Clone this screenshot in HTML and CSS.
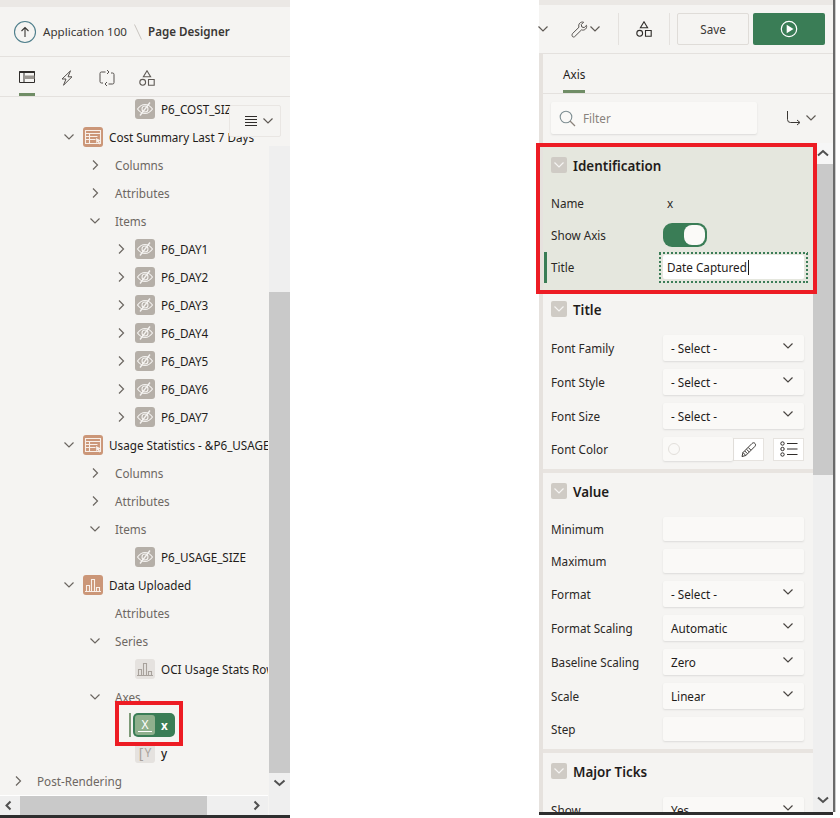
FILE: index.html
```html
<!DOCTYPE html>
<html lang="en">
<head>
<meta charset="utf-8">
<title>Page Designer</title>
<link rel="stylesheet" href="styles.css">
</head>
<body>
<svg class="defs" width="0" height="0" aria-hidden="true">
  <symbol id="chev-r" viewBox="0 0 10 12"><path d="M3 1.500 7.500 6 3 10.500" fill="none" stroke="currentColor" stroke-width="1.200"/></symbol>
  <symbol id="chev-d" viewBox="0 0 12 10"><path d="M1.500 2.500 6 7l4.500-4.500" fill="none" stroke="currentColor" stroke-width="1.200"/></symbol>
  <symbol id="eye" viewBox="0 0 20 20"><g fill="none" stroke="#f5f3f1" stroke-width="1.100"><path d="M2.500 10C5 6.500 7.500 5.500 10 5.500S15 6.500 17.500 10C15 13.500 12.500 14.500 10 14.500S5 13.500 2.500 10Z"/><circle cx="10" cy="10" r="3"/><path d="M15 3.500 5 16.500" stroke-width="1.300"/></g></symbol>
  <symbol id="report" viewBox="0 0 20 20"><g fill="none" stroke="#f8efe9" stroke-width="1.100"><path d="M2.500 3.500h15v13h-15zM2.500 6.500h15M2.500 9.500h12M2.500 12.500h10M6.500 6.500v10"/></g><path d="M13 11l5 2.500-2 .8 1.500 2.500-1.300.7-1.400-2.500-1.500 1.300z" fill="#f8efe9"/></symbol>
  <symbol id="chart" viewBox="0 0 20 20"><g fill="none" stroke="currentColor" stroke-width="1.100"><path d="M3.500 10.500h3v6h-3zM8.500 4.500h3v12h-3zM13.500 12.500h3v4h-3zM2 16.500h16"/></g></symbol>
  <symbol id="shapes" viewBox="0 0 16 16"><g fill="none" stroke="currentColor" stroke-width="1.100"><path d="M8 .8l3.600 6H4.400zM9.500 9.500h5.700v5.700H9.500z"/><circle cx="3.700" cy="12.300" r="2.900"/></g></symbol>
</svg>

<div class="app">
  <section class="col-left">
    <div class="strip-left"></div>
    <header class="crumbs">
      <svg class="up-icon" width="24" height="24" viewBox="0 0 24 24"><circle cx="12" cy="12" r="10.500" fill="none" stroke="#4f7f8c" stroke-width="1.100"/><path d="M12 17V7.500M8.500 11 12 7.500l3.500 3.500" fill="none" stroke="#3a3734" stroke-width="1.100"/></svg>
      <span class="crumb">Application 100</span>
      <svg class="crumb-sep" width="8" height="16" viewBox="0 0 8 16"><path d="M.5.500 7.500 15.500" stroke="#c9c5c0" fill="none"/></svg>
      <span class="crumb crumb-strong">Page Designer</span>
    </header>
    <nav class="left-tabs">
      <div class="ltab ltab-active">
        <svg width="16" height="16" viewBox="0 0 16 16"><path d="M.5 1.500h15v11H.5z" fill="none" stroke="#2f2c2a"/><path d="M.5 2h15" stroke="#2f2c2a" stroke-width="2"/><path d="M5 2.500v10" stroke="#2f2c2a"/><path d="M5 5.500h10.500V9H5z" fill="#9a9691"/></svg>
      </div>
      <div class="ltab">
        <svg width="16" height="16" viewBox="0 0 16 16"><path d="M11.500.8 3 9h4l-2.500 6.200L13 6.800H9z" fill="none" stroke="#55514e"/></svg>
      </div>
      <div class="ltab">
        <svg width="16" height="16" viewBox="0 0 16 16"><path d="M6.500 2H2.500A1.500 1.500 0 0 0 1 3.500v8A1.500 1.500 0 0 0 2.500 13H4M9.500 14h4a1.500 1.500 0 0 0 1.500-1.500v-8A1.500 1.500 0 0 0 13.500 3H12M8 0 10 2 8 4M8 12 6 14l2 2" fill="none" stroke="#55514e"/></svg>
      </div>
      <div class="ltab"><svg class="ink-mid" width="16" height="16"><use href="#shapes"/></svg></div>
    </nav>
    <div class="left-body">
      <div class="left-main">
        <div class="tree">
          <div class="row row-first lvl4"><span class="tw"></span><svg class="ic ic-item"><use href="#eye"/></svg><span class="name">P6_COST_SIZE</span></div>
          <div class="row lvl2"><svg class="tw"><use href="#chev-d"/></svg><svg class="ic ic-region"><use href="#report"/></svg><span class="name">Cost Summary Last 7 Days</span></div>
          <div class="row lvl3"><svg class="tw"><use href="#chev-r"/></svg><span class="group">Columns</span></div>
          <div class="row lvl3"><svg class="tw"><use href="#chev-r"/></svg><span class="group">Attributes</span></div>
          <div class="row lvl3"><svg class="tw"><use href="#chev-d"/></svg><span class="group">Items</span></div>
          <div class="row lvl4"><svg class="tw"><use href="#chev-r"/></svg><svg class="ic ic-item"><use href="#eye"/></svg><span class="name">P6_DAY1</span></div>
          <div class="row lvl4"><svg class="tw"><use href="#chev-r"/></svg><svg class="ic ic-item"><use href="#eye"/></svg><span class="name">P6_DAY2</span></div>
          <div class="row lvl4"><svg class="tw"><use href="#chev-r"/></svg><svg class="ic ic-item"><use href="#eye"/></svg><span class="name">P6_DAY3</span></div>
          <div class="row lvl4"><svg class="tw"><use href="#chev-r"/></svg><svg class="ic ic-item"><use href="#eye"/></svg><span class="name">P6_DAY4</span></div>
          <div class="row lvl4"><svg class="tw"><use href="#chev-r"/></svg><svg class="ic ic-item"><use href="#eye"/></svg><span class="name">P6_DAY5</span></div>
          <div class="row lvl4"><svg class="tw"><use href="#chev-r"/></svg><svg class="ic ic-item"><use href="#eye"/></svg><span class="name">P6_DAY6</span></div>
          <div class="row lvl4"><svg class="tw"><use href="#chev-r"/></svg><svg class="ic ic-item"><use href="#eye"/></svg><span class="name">P6_DAY7</span></div>
          <div class="row lvl2"><svg class="tw"><use href="#chev-d"/></svg><svg class="ic ic-region"><use href="#report"/></svg><span class="name">Usage Statistics - &amp;P6_USAGE_SIZE.</span></div>
          <div class="row lvl3"><svg class="tw"><use href="#chev-r"/></svg><span class="group">Columns</span></div>
          <div class="row lvl3"><svg class="tw"><use href="#chev-r"/></svg><span class="group">Attributes</span></div>
          <div class="row lvl3"><svg class="tw"><use href="#chev-d"/></svg><span class="group">Items</span></div>
          <div class="row lvl4"><span class="tw"></span><svg class="ic ic-item"><use href="#eye"/></svg><span class="name">P6_USAGE_SIZE</span></div>
          <div class="row lvl2"><svg class="tw"><use href="#chev-d"/></svg><svg class="ic ic-region ic-chart"><use href="#chart"/></svg><span class="name">Data Uploaded</span></div>
          <div class="row lvl3"><span class="tw"></span><span class="group">Attributes</span></div>
          <div class="row lvl3"><svg class="tw"><use href="#chev-d"/></svg><span class="group">Series</span></div>
          <div class="row lvl4"><span class="tw"></span><svg class="ic ic-light"><use href="#chart"/></svg><span class="name">OCI Usage Stats Rows</span></div>
          <div class="row lvl3"><svg class="tw"><use href="#chev-d"/></svg><span class="group">Axes</span></div>
          <div class="row lvl4">
            <span class="tw sel-mark"></span>
            <span class="sel-pill">
              <svg class="ic ic-x" viewBox="0 0 20 20"><path d="M3 16.500h14" stroke="#fff" fill="none"/></svg>
              <span class="sel-x-letter">X</span>
              <span class="sel-name">x</span>
            </span>
          </div>
          <div class="row lvl4"><span class="tw"></span><span class="ic ic-y"><span class="y-bracket">[</span>Y</span><span class="name name-med">y</span></div>
          <div class="row lvl1"><svg class="tw"><use href="#chev-r"/></svg><span class="group">Post-Rendering</span></div>
        </div>
        <div class="hscroll">
          <svg class="harrow" width="20" height="19" viewBox="0 0 20 19"><path d="M10.500 5.500 6.500 9.500l4 4" fill="none" stroke="#505050" stroke-width="2"/></svg>
          <div class="hthumb"></div>
          <svg class="harrow harrow-end" width="20" height="19" viewBox="0 0 20 19"><path d="M7.500 5.500l4 4-4 4" fill="none" stroke="#505050" stroke-width="2"/></svg>
        </div>
      </div>
      <div class="vscroll vscroll-left">
        <div class="vthumb"></div>
        <svg class="varrow" width="21" height="21" viewBox="0 0 21 21"><path d="M5.500 7.500l5 4.500 5-4.500" fill="none" stroke="#505050" stroke-width="2"/></svg>
      </div>
      <div class="tree-menu">
        <svg width="14" height="12" viewBox="0 0 14 12"><path d="M1 1.500h12M1 4.500h12M1 7.500h12M1 10.500h12" stroke="#2f2c2a"/></svg>
        <svg class="ink-mid" width="12" height="10"><use href="#chev-d"/></svg>
      </div>
    </div>
    <div class="bottom-line"></div>
  </section>

  <section class="col-mid"></section>

  <section class="col-right">
    <div class="strip-right"></div>
    <header class="toolbar">
      <svg class="ink-mid tb-lead" width="12" height="10"><use href="#chev-d"/></svg>
      <svg class="tb-wrench" width="17" height="17" viewBox="0 0 17 17"><path d="M1.300 12.800 8 6.200C7.400 4.500 7.800 3 8.900 2c1-.9 2.300-1.200 3.700-.8L10.300 3.500l.5 2.500 2.400.6 2.300-2.300c.4 1.400.1 2.700-.9 3.700-1 1-2.500 1.400-4.100.9l-6.700 6.600c-.7.700-1.700.7-2.300.1-.6-.7-.6-1.700-.2-2.800Z" fill="none" stroke="#55514e"/></svg>
      <svg class="ink-mid tb-chev" width="12" height="10"><use href="#chev-d"/></svg>
      <span class="tb-sep"></span>
      <svg class="tb-shapes ink-dark" width="16" height="16"><use href="#shapes"/></svg>
      <span class="tb-sep tb-sep2"></span>
      <button class="btn-save" type="button">Save</button>
      <button class="btn-run" type="button" aria-label="Run">
        <svg width="18" height="18" viewBox="0 0 18 18"><circle cx="9" cy="9" r="7.700" fill="none" stroke="#fff" stroke-width="1.200"/><path d="M6.700 4.800 13.500 9l-6.800 4.200z" fill="#fff"/></svg>
      </button>
    </header>
    <div class="right-body">
      <div class="band"></div>
      <div class="right-inner">
        <div class="rtabs"><span class="rtab">Axis</span></div>
        <div class="filter-bar">
          <div class="filter">
            <svg width="17" height="17" viewBox="0 0 17 17"><circle cx="7" cy="7" r="5.800" fill="none" stroke="#7f8f93" stroke-width="1.100"/><path d="M11 11l5 5" stroke="#8b837b" stroke-width="1.200"/></svg>
            <span class="filter-text">Filter</span>
          </div>
          <svg class="sort-ic" width="16" height="16" viewBox="0 0 16 16"><path d="M1.500 1v8.500a3 3 0 0 0 3 3h9M11 10l3 2.500-3 2.500" fill="none" stroke="#3a3734"/></svg>
          <svg class="ink-mid sort-chev" width="12" height="10"><use href="#chev-d"/></svg>
        </div>
        <div class="props-wrap">
          <div class="props">
            <section class="sec sec-hl">
              <h2 class="sec-head"><span class="toggle-box"><svg width="12" height="10"><use href="#chev-d"/></svg></span>Identification</h2>
              <div class="prop"><span class="lbl">Name</span><span class="val-text">x</span></div>
              <div class="prop"><span class="lbl">Show Axis</span><span class="switch"><span class="knob"></span></span></div>
              <div class="prop prop-active">
                <span class="lbl">Title</span>
                <span class="field field-focus">Date Captured<span class="caret"></span></span>
              </div>
            </section>
            <section class="sec">
              <h2 class="sec-head"><span class="toggle-box"><svg width="12" height="10"><use href="#chev-d"/></svg></span>Title</h2>
              <div class="prop prop-sel"><span class="lbl">Font Family</span><span class="field field-sel">- Select -<svg class="sel-chev" width="12" height="10"><use href="#chev-d"/></svg></span></div>
              <div class="prop prop-sel"><span class="lbl">Font Style</span><span class="field field-sel">- Select -<svg class="sel-chev" width="12" height="10"><use href="#chev-d"/></svg></span></div>
              <div class="prop prop-sel"><span class="lbl">Font Size</span><span class="field field-sel">- Select -<svg class="sel-chev" width="12" height="10"><use href="#chev-d"/></svg></span></div>
              <div class="prop">
                <span class="lbl">Font Color</span>
                <span class="color-group">
                  <span class="field color-field"><span class="swatch"></span></span>
                  <span class="mini-btn">
                    <svg width="18" height="18" viewBox="0 0 18 18"><path d="M2 16.500l1-4L12 3.500c1-1 2.300-1 3 0 .8.800.7 2-.2 3L5.800 15.500zM3 12.500l2.800 3M4.800 11l2.500 2.600M6.500 9.300l2.600 2.500M8.300 7.500l2.500 2.600" fill="none" stroke="#3a3734"/></svg>
                  </span>
                  <span class="mini-btn mini-btn-list">
                    <svg width="18" height="16" viewBox="0 0 18 16"><path d="M7 2.500h10.500M7 8h10.500M7 13.500h10.500" stroke="#2f2c2a"/><g fill="none" stroke="#2f2c2a"><circle cx="2.500" cy="2.500" r="1.700"/><circle cx="2.500" cy="8" r="1.700"/><circle cx="2.500" cy="13.500" r="1.700"/></g></svg>
                  </span>
                </span>
              </div>
            </section>
            <section class="sec">
              <h2 class="sec-head"><span class="toggle-box"><svg width="12" height="10"><use href="#chev-d"/></svg></span>Value</h2>
              <div class="prop"><span class="lbl">Minimum</span><span class="field"></span></div>
              <div class="prop"><span class="lbl">Maximum</span><span class="field"></span></div>
              <div class="prop prop-sel"><span class="lbl">Format</span><span class="field field-sel">- Select -<svg class="sel-chev" width="12" height="10"><use href="#chev-d"/></svg></span></div>
              <div class="prop prop-sel"><span class="lbl">Format Scaling</span><span class="field field-sel">Automatic<svg class="sel-chev" width="12" height="10"><use href="#chev-d"/></svg></span></div>
              <div class="prop prop-sel"><span class="lbl">Baseline Scaling</span><span class="field field-sel">Zero<svg class="sel-chev" width="12" height="10"><use href="#chev-d"/></svg></span></div>
              <div class="prop prop-sel"><span class="lbl">Scale</span><span class="field field-sel">Linear<svg class="sel-chev" width="12" height="10"><use href="#chev-d"/></svg></span></div>
              <div class="prop"><span class="lbl">Step</span><span class="field"></span></div>
            </section>
            <section class="sec">
              <h2 class="sec-head"><span class="toggle-box"><svg width="12" height="10"><use href="#chev-d"/></svg></span>Major Ticks</h2>
              <div class="prop prop-sel"><span class="lbl">Show</span><span class="field field-sel">Yes<svg class="sel-chev" width="12" height="10"><use href="#chev-d"/></svg></span></div>
            </section>
          </div>
          <div class="vscroll vscroll-right">
            <svg class="varrow varrow-top" width="20" height="21" viewBox="0 0 20 21"><path d="M5 12.500l5-4.500 5 4.500" fill="none" stroke="#505050" stroke-width="2"/></svg>
            <div class="vthumb-right"></div>
            <svg class="varrow varrow-end" width="20" height="21" viewBox="0 0 20 21"><path d="M5 7.500l5 4.500 5-4.500" fill="none" stroke="#505050" stroke-width="2"/></svg>
          </div>
        </div>
      </div>
    </div>
    <div class="bottom-line"></div>
  </section>
  <div class="edge"></div>

  <div class="callout callout-id"></div>
  <div class="callout callout-node"></div>
</div>
</body>
</html>
```
FILE: styles.css
```css
* { box-sizing: border-box; }
html, body { margin: 0; padding: 0; background: #fff; }
body { font-family: "Noto Sans", "Open Sans", sans-serif; font-size: 11.700px; color: #1f1c1a; }
.defs { position: absolute; }
.app { position: relative; display: flex; align-items: flex-start; width: 840px; height: 818px; overflow: hidden; background: #fff; }
svg { display: block; flex: none; }
.ink-mid { color: #5f5a55; }
.ink-dark { color: #2f2c2a; }

.col-left, .col-right { display: flex; flex-direction: column; background: #f5f4f2; }
.col-left { width: 290px; height: 818px; }
.col-mid { width: 249px; height: 814px; margin-top: 4px; background: #fff; }
.col-right { width: 294px; height: 815px; }
.edge { width: 3px; height: 812px; background: #ccc; border-left: 2px solid #6a6a6a; }
.strip-left { height: 7px; flex: none; background: #ebe8e5; }
.strip-right { height: 5px; flex: none; background: #ebe8e5; }
.bottom-line { height: 3px; flex: none; background: #2e2e2e; }

.crumbs { display: flex; align-items: center; height: 50px; flex: none; padding-left: 13px; border-bottom: 1px solid #e4e1de; }
.up-icon { margin-right: 6px; }
.crumb { font-size: 11.600px; color: #3a3734; white-space: nowrap; }
.crumb-strong { font-weight: 600; }
.crumb-sep { margin: 0 6px 0 7px; }

.left-tabs { display: flex; height: 40px; flex: none; padding-left: 19px; gap: 24px; border-bottom: 1px solid #e4e1de; }
.ltab { width: 16px; height: 39px; padding-top: 13px; }
.ltab-active { border-bottom: 3px solid #708d66; }

.left-body { position: relative; flex: 1; min-height: 0; display: flex; }
.left-main { width: 268px; display: flex; flex-direction: column; }
.tree { flex: 1; min-height: 0; overflow: hidden; }
.row { display: flex; align-items: center; height: 28px; white-space: nowrap; color: #1f1c1a; }
.row-first { margin-top: -2px; }
.lvl1 { padding-left: 12px; }
.lvl2 { padding-left: 63px; }
.lvl3 { padding-left: 89px; }
.lvl4 { padding-left: 115px; }
.tw { width: 12px; height: 12px; margin-right: 8px; flex: none; color: #6b6661; }
.lvl1 .tw { margin-right: 13px; }
.lvl2 .tw { margin-right: 8px; }
.lvl3 .tw { margin-right: 14px; }
.ic { width: 20px; height: 20px; border-radius: 3px; flex: none; margin-right: 6px; }
.ic-item { background: #b5afa8; }
.ic-region { background: #cb9678; }
.ic-chart { color: #f8efe9; }
.ic-light { background: #e5e2df; color: #a8a29c; }
.group { color: #6d6762; }
.name { color: #1f1c1a; }
.name-med { font-weight: 500; }
.ic-y { display: flex; align-items: center; justify-content: center; background: #e5e2df; color: #a8a29c; font-size: 12px; line-height: 1; }
.y-bracket { margin-right: 1px; font-size: 14px; }
.sel-mark { width: 2px; height: 24px; margin-left: 14px; margin-right: 2px; background: #7d9a78; }
.sel-pill { position: relative; display: flex; align-items: center; width: 42px; height: 24px; padding-left: 2px; border-radius: 5px; background: #3a7d56; }
.ic-x { background: #8fb08d; margin-right: 6px; }
.sel-x-letter { position: absolute; left: 2px; width: 20px; text-align: center; color: #fff; font-size: 12px; line-height: 20px; }
.sel-name { color: #fff; font-weight: 700; }

.hscroll { display: flex; height: 20px; flex: none; background: #efefef; border-top: 1px solid #fff; }
.harrow { width: 20px; height: 19px; }
.hthumb { width: 187px; background: #c9c9c9; }
.harrow-end { margin-left: 40px; }
.vscroll { width: 21px; display: flex; flex-direction: column; align-items: center; background: #efefef; }
.vscroll-left { margin-left: 1px; margin-top: 49px; padding-top: 146px; }
.vthumb { width: 100%; height: 481px; flex: none; background: #c9c9c9; }
.tree-menu { position: absolute; left: 229px; top: 8px; display: flex; align-items: center; gap: 4px; width: 52px; height: 32px; padding-left: 14px; background: #f5f4f2; border: 1px solid #e9e6e3; border-radius: 2px; }
.varrow { flex: none; }

.toolbar { display: flex; align-items: center; height: 49px; flex: none; border-bottom: 1px solid #e4e1de; }
.tb-lead { margin-left: -2px; }
.tb-wrench { margin-left: 22px; }
.tb-chev { margin-left: 1px; }
.tb-sep { width: 1px; height: 32px; margin-left: 17px; background: #e4e1de; }
.tb-shapes { margin-left: 17px; }
.tb-sep2 { margin-left: 17px; }
.btn-save, .btn-run { height: 32px; width: 72px; border-radius: 2px; font: inherit; padding: 0; display: flex; align-items: center; justify-content: center; }
.btn-save { margin-left: 7px; background: #f5f4f2; border: 1px solid #dfdcd8; color: #3a3734; }
.btn-run { margin-left: 4px; background: #3a7d56; border: 0; }

.right-body { display: flex; flex: 1; min-height: 0; }
.band { width: 4px; flex: none; background: #e6e2de; }
.right-inner { flex: 1; min-width: 0; display: flex; flex-direction: column; }
.rtabs { height: 40px; flex: none; padding-left: 20px; border-bottom: 1px solid #e4e1de; }
.rtab { display: inline-block; height: 39px; padding-top: 11px; line-height: 18px; border-bottom: 3px solid #708d66; color: #1f1c1a; }
.filter-bar { display: flex; align-items: center; height: 49px; flex: none; padding: 0 0 1px 8px; }
.filter { display: flex; align-items: center; width: 206px; height: 32px; padding-left: 8px; background: #faf9f7; border-radius: 2px; box-shadow: 0 1px 2px rgba(0,0,0,.1); }
.filter-text { margin-left: 7px; color: #88827c; }
.sort-ic { margin-left: 29px; }
.sort-chev { margin-left: 3px; }

.props-wrap { display: flex; flex: 1; min-height: 0; }
.props { width: 270px; flex: none; overflow: hidden; }
.sec { padding: 10px 9px 8px 8px; border-bottom: 4px solid #e8e4e0; display: flex; flex-direction: column; gap: 8px; }
.sec-hl { padding: 14px 9px 12px 8px; border-bottom: 0; background: #e5e7de; }
.sec-head { display: flex; align-items: center; height: 16px; margin: 0 0 10px; padding-top: 2px; font-size: 13.400px; font-weight: 600; color: #1f1c1a; gap: 6px; }
.toggle-box { display: flex; align-items: center; justify-content: center; width: 16px; height: 16px; margin-top: -2px; border-radius: 2px; background: #cfcbc5; color: #f5f4f2; }
.prop { display: flex; align-items: center; min-height: 24px; }
.lbl { width: 112px; flex: none; color: #2a2725; white-space: nowrap; }
.val-text { padding-left: 4px; color: #2a2725; }
.field { display: flex; align-items: center; position: relative; width: 141px; height: 24px; padding-left: 4px; border-radius: 2px; background: #faf9f7; box-shadow: 0 1px 2px rgba(0,0,0,.1); color: #1f1c1a; white-space: nowrap; }
.field-sel { height: 26px; padding-left: 8px; }
.sel-chev { position: absolute; right: 10px; top: 6px; color: #4a4642; }
.switch { display: flex; align-items: center; justify-content: flex-end; width: 44px; height: 24px; padding-right: 2px; border-radius: 9px; background: #3a7d56; }
.knob { width: 21px; height: 20px; border-radius: 8px; background: #fbfaf8; }
.prop-active { position: relative; }
.prop-active::before { content: ""; position: absolute; left: -7px; top: -3px; width: 3px; height: 31px; background: #3a7d56; }
.field-focus { background: #fff; box-shadow: none; }
.field-focus::after {
  content: ""; position: absolute; inset: -3px -4px -4px -4px;
  background:
    repeating-linear-gradient(90deg, #3a7d56 0 2px, transparent 2px 4px) left top / 100% 2px no-repeat,
    repeating-linear-gradient(90deg, #3a7d56 0 2px, transparent 2px 4px) left bottom / 100% 2px no-repeat,
    repeating-linear-gradient(0deg, #3a7d56 0 2px, transparent 2px 4px) left top / 2px 100% no-repeat,
    repeating-linear-gradient(0deg, #3a7d56 0 2px, transparent 2px 4px) right top / 2px 100% no-repeat;
}
.caret { width: 1px; height: 15px; margin-left: 1px; background: #1f1c1a; }
.color-group { display: flex; align-items: center; }
.color-field { width: 70px; padding-left: 5px; }
.swatch { width: 12px; height: 12px; border: 1px solid #e2dfdb; border-radius: 50%; }
.mini-btn { display: flex; align-items: center; justify-content: center; width: 31px; height: 23px; background: #fff; border: 1px solid #e6e3df; }
.mini-btn-list { margin-left: 9px; }

.vscroll-right { width: 20px; margin-top: 0; background: #efefef; }
.varrow-top { background: #f6f6f6; }
.vthumb-right { width: 100%; height: 311px; flex: none; background: #c9c9c9; }
.varrow-end { margin-top: auto; margin-bottom: 1px; }

.callout { position: absolute; border: 4px solid #ed1c24; pointer-events: none; }
.callout-id { left: 536px; top: 143px; width: 281px; height: 151px; }
.callout-node { left: 115px; top: 701px; width: 68px; height: 45px; }
```
